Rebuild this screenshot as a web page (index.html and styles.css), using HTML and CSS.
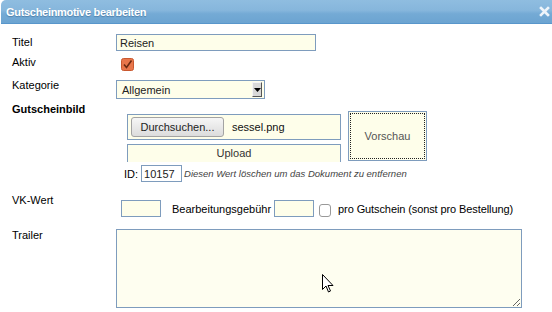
FILE: index.html
```html
<!DOCTYPE html>
<html lang="de">
<head>
    <meta charset="UTF-8">
    <title>Gutscheinmotive bearbeiten</title>
    <link rel="stylesheet" href="styles.css">
</head>
<body>
    <div class="dialog">
        <div class="titlebar">
            <span class="title">Gutscheinmotive bearbeiten</span>
            <svg class="close" width="11" height="11" viewBox="0 0 11 11">
                <path d="M2 2 L9 9 M9 2 L2 9" stroke="#eef4fa" stroke-width="2.6" stroke-linecap="square"/>
            </svg>
        </div>

        <div class="form">
            <div class="row row-titel">
                <span class="label">Titel</span>
                <input class="text titel-input" type="text" value="Reisen">
            </div>

            <div class="row row-aktiv">
                <span class="label">Aktiv</span>
                <span class="check checked">
                    <svg width="13" height="13" viewBox="0 0 13 13">
                        <rect x="0.5" y="0.5" width="12" height="12" rx="2" fill="#e8764b" stroke="#c9582f"/>
                        <path d="M3 6.5 L5.5 9.5 L10.5 2.5" fill="none" stroke="#6a2a12" stroke-width="1.6"/>
                    </svg>
                </span>
            </div>

            <div class="row row-kategorie">
                <span class="label">Kategorie</span>
                <div class="select">
                    <span class="select-value">Allgemein</span>
                    <span class="select-btn">
                        <svg width="7" height="4" viewBox="0 0 7 4"><path d="M0 0 H7 L3.5 4 Z" fill="#000"/></svg>
                    </span>
                </div>
            </div>

            <div class="row row-bild">
                <span class="label bold">Gutscheinbild</span>
                <div class="bild">
                    <div class="bild-top">
                        <div class="upload-stack">
                            <div class="file-box">
                                <button class="browse">Durchsuchen...</button>
                                <span class="file-name">sessel.png</span>
                            </div>
                            <div class="upload-btn">Upload</div>
                        </div>
                        <div class="preview">
                            <div class="preview-inner">Vorschau</div>
                        </div>
                    </div>
                    <div class="id-row">
                        <span>ID:</span>
                        <input class="text id-input" type="text" value="10157">
                        <span class="hint">Diesen Wert löschen um das Dokument zu entfernen</span>
                    </div>
                </div>
            </div>

            <div class="row row-vk">
                <span class="label">VK-Wert</span>
                <div class="vk-fields">
                    <input class="text small-input vk-input" type="text">
                    <span class="fee-label">Bearbeitungsgebühr</span>
                    <input class="text small-input" type="text">
                    <span class="check plain"></span>
                    <span class="per-label">pro Gutschein (sonst pro Bestellung)</span>
                </div>
            </div>

            <div class="row row-trailer">
                <span class="label">Trailer</span>
                <textarea class="trailer"></textarea>
            </div>
        </div>

        <!-- mouse pointer from the screenshot -->
        <svg class="cursor" width="12" height="19" viewBox="0 0 12 19">
            <path d="M0.5 0.5 L0.5 15.5 L4 12 L6.5 18 L8.5 17 L6 11.5 L11 11.5 Z" fill="#fff" stroke="#000" stroke-width="1" stroke-linejoin="miter"/>
        </svg>
    </div>
</body>
</html>
```

FILE: styles.css
```css
body {
    margin: 0;
    background-color: #fff;
}

.dialog {
    position: relative;
    width: 552px;
    height: 312px;
    overflow: hidden;
    background-color: #fff;
    font-family: "Liberation Sans", Arial, sans-serif;
    font-size: 11px;
    color: #000;
}

.titlebar {
    height: 23px;
    margin-left: 1px;
    padding: 0 5px;
    display: flex;
    align-items: center;
    justify-content: space-between;
    background: linear-gradient(to bottom, #8fbde0 0%, #86b6dc 45%, #74aad5 60%, #6ca4d1 100%);
    border-bottom: 1px solid #5896cb;
    border-radius: 5px 0 0 0;
}

.title {
    color: #fff;
    font-weight: bold;
    font-size: 11px;
    letter-spacing: -0.3px;
    text-shadow: 0 1px 1px rgba(40, 80, 120, 0.45);
}

.close {
    margin-right: -3px;
}

.form {
    padding: 10px 0 0 12px;
}

.row {
    display: flex;
    align-items: flex-start;
}

.label {
    width: 104px;
    flex: none;
    line-height: 14px;
}

.bold {
    font-weight: bold;
}

.text {
    box-sizing: border-box;
    height: 17px;
    margin: 0;
    padding: 0 3px;
    border: 1px solid #7e9cbd;
    background-color: #fefeea;
    font-family: inherit;
    font-size: 11px;
    color: #222;
    outline: none;
}

.row-titel .label {
    padding-top: 1px;
}

.titel-input {
    width: 200px;
}

.row-aktiv {
    margin-top: 4px;
}

.check {
    display: block;
    width: 13px;
    height: 13px;
}

.check svg {
    display: block;
}

.row-aktiv .check {
    margin: 3px 0 0 5px;
}

.row-kategorie {
    margin-top: 7px;
}

.select {
    box-sizing: border-box;
    width: 149px;
    height: 19px;
    margin-top: 2px;
    border: 1px solid #7e9cbd;
    background-color: #fefeea;
    display: flex;
    align-items: center;
    justify-content: space-between;
    padding: 0 2px 0 5px;
    color: #222;
}

.select-btn {
    box-sizing: border-box;
    width: 10px;
    height: 15px;
    background-color: #d8d8d8;
    border-top: 1px solid #f4f4f4;
    border-left: 1px solid #f4f4f4;
    border-right: 1px solid #555;
    border-bottom: 1px solid #555;
    display: flex;
    align-items: center;
    justify-content: center;
}

.row-bild {
    margin-top: 3px;
}

.bild {
    margin-top: 9px;
}

.bild-top {
    display: flex;
    align-items: flex-start;
}

.upload-stack {
    margin: 3px 0 0 11px;
    display: flex;
    flex-direction: column;
    gap: 4px;
}

.file-box {
    box-sizing: border-box;
    width: 214px;
    height: 26px;
    border: 1px solid #7e9cbd;
    background-color: #fefeea;
    display: flex;
    align-items: center;
    padding-left: 3px;
    gap: 8px;
}

.browse {
    box-sizing: border-box;
    width: 93px;
    height: 20px;
    margin: 0;
    padding: 0;
    border: 1px solid #a3a3a3;
    border-radius: 3px;
    background: linear-gradient(to bottom, #f6f6f6, #dcdcdc);
    font-family: inherit;
    font-size: 11px;
    color: #222;
}

.file-name {
    color: #111;
}

.upload-btn {
    box-sizing: border-box;
    width: 214px;
    height: 18px;
    border: 1px solid #7e9cbd;
    border-bottom: none;
    background-color: #fefeea;
    text-align: center;
    line-height: 17px;
    color: #333;
}

.preview {
    box-sizing: border-box;
    width: 79px;
    height: 50px;
    margin-left: 7px;
    padding: 1px;
    border: 1px solid #7e9cbd;
    background-color: #fefeea;
}

.preview-inner {
    box-sizing: border-box;
    height: 100%;
    border: 1px dotted #222;
    display: flex;
    align-items: center;
    justify-content: center;
    color: #555;
}

.id-row {
    margin: 3px 0 0 8px;
    display: flex;
    align-items: center;
}

.id-input {
    width: 41px;
    margin-left: 3px;
    background-color: #fff;
    padding-left: 2px;
}

.hint {
    margin-left: 2px;
    font-size: 9.5px;
    font-style: italic;
    color: #444;
}

.row-vk {
    margin-top: 11px;
}

.vk-fields {
    margin-top: 7px;
    display: flex;
    align-items: center;
}

.small-input {
    width: 40px;
}

.vk-input {
    margin-left: 5px;
}

.fee-label {
    margin: 0 3px 0 11px;
}

.check.plain {
    box-sizing: border-box;
    width: 12px;
    height: 13px;
    margin: 3px 7px 0 5px;
    border: 1px solid #999;
    border-radius: 3px;
    background-color: #fff;
}

.per-label {
    letter-spacing: -0.1px;
}

.row-trailer {
    margin-top: 11px;
}

.trailer {
    box-sizing: border-box;
    width: 406px;
    height: 79px;
    margin: 1px 0 0 0;
    border: 1px solid #7e9cbd;
    background-color: #fefef0;
    font-family: inherit;
    outline: none;
}

.cursor {
    position: absolute;
    left: 322px;
    top: 274px;
}
```
